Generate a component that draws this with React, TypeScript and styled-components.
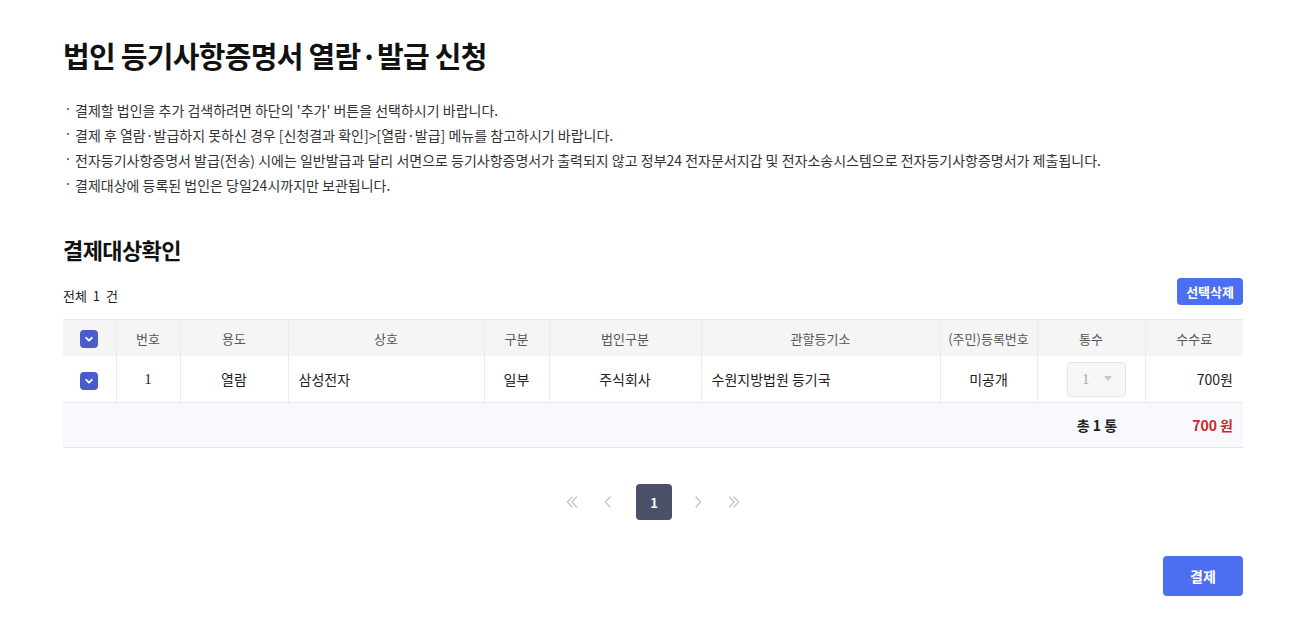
import React from 'react'
import styled, { createGlobalStyle } from 'styled-components'

const GlobalStyle = createGlobalStyle`
  html, body {
    margin: 0;
    padding: 0;
    background: #fff;
    font-family: "Noto Sans CJK KR", "Noto Sans", sans-serif;
    color: #222;
  }
`

const Page = styled.div`
  width: 1180px;
  padding: 35px 0 30px 63px;
`

const Title = styled.h1`
  margin: 0;
  font-size: 29px;
  line-height: 40px;
  font-weight: 700;
  color: #111;
  letter-spacing: -0.7px;
`

const Notice = styled.ul`
  list-style: none;
  margin: 23px 0 0;
  padding: 0;
`

const NoticeItem = styled.li`
  position: relative;
  padding-left: 12px;
  font-size: 14px;
  line-height: 25px;
  color: #333;
  &::before {
    content: '·';
    position: absolute;
    left: 1px;
    top: -2px;
    color: #555;
  }
`

const SubTitle = styled.h2`
  margin: 36px 0 0;
  font-size: 22px;
  line-height: 30px;
  font-weight: 700;
  color: #111;
  letter-spacing: -0.6px;
`

const Toolbar = styled.div`
  margin-top: 14px;
  display: flex;
  justify-content: space-between;
  align-items: flex-end;
`

const Total = styled.div`
  font-size: 13px;
  line-height: 18px;
  color: #222;
  word-spacing: 3px;
`

const SmallButton = styled.button`
  height: 27px;
  padding: 0 9px;
  border: none;
  border-radius: 4px;
  background: #4c6ef0;
  color: #fff;
  font-family: inherit;
  font-size: 13px;
  font-weight: 700;
`

const Table = styled.table`
  margin-top: 14px;
  width: 1180px;
  border-collapse: collapse;
  table-layout: fixed;
  font-size: 14px;
  border-top: 1px solid #e8e8e8;
  border-bottom: 1px solid #e5e5e5;
`

const Th = styled.th`
  height: 36px;
  padding: 0;
  background: #f5f5f5;
  font-weight: 400;
  font-size: 13px;
  color: #555;
  text-align: center;
  border-left: 1px solid #ebebeb;
  &:first-child { border-left: none; }
`

const Td = styled.td<{ align?: string; serif?: boolean }>`
  height: 46px;
  padding: 0 10px;
  text-align: ${({ align }) => align || 'center'};
  color: #222;
  border-left: 1px solid #ebebeb;
  border-bottom: 1px solid #ebebeb;
  font-family: ${({ serif }) => (serif ? '"Liberation Serif", serif' : 'inherit')};
  font-size: ${({ serif }) => (serif ? '15px' : '14px')};
  &:first-child { border-left: none; }
`

const SumRow = styled.tr`
  background: #f8f9fd;
`

const SumCell = styled.td<{ red?: boolean }>`
  height: 44px;
  padding: ${({ red }) => (red ? '0 10px' : '0 0 0 12px')};
  font-weight: 700;
  font-size: 14px;
  color: ${({ red }) => (red ? '#c8282e' : '#222')};
  text-align: ${({ red }) => (red ? 'right' : 'center')};
`

const Check = styled.span`
  display: inline-flex;
  align-items: center;
  justify-content: center;
  width: 18px;
  height: 18px;
  border-radius: 4px;
  background: #4a5bcb;
  vertical-align: middle;
`

const SelectBox = styled.div`
  display: inline-flex;
  align-items: center;
  justify-content: space-between;
  width: 59px;
  height: 35px;
  margin-left: 11px;
  box-sizing: border-box;
  padding: 0 13px 0 14px;
  border: 1px solid #e6e6e6;
  border-radius: 4px;
  background: #f7f7f7;
  color: #aaa;
  font-size: 15px;
  font-family: "Liberation Serif", serif;
  vertical-align: middle;
`

const Pager = styled.div`
  margin-top: 36px;
  display: flex;
  justify-content: center;
  align-items: center;
`

const PageArrow = styled.span`
  width: 36px;
  height: 36px;
  display: flex;
  align-items: center;
  justify-content: center;
`

const PageNum = styled.span<{ active?: boolean }>`
  width: 36px;
  height: 36px;
  margin: 0 8px 0 10px;
  display: flex;
  align-items: center;
  justify-content: center;
  border-radius: 4px;
  background: ${({ active }) => (active ? '#4b5069' : 'transparent')};
  color: ${({ active }) => (active ? '#fff' : '#333')};
  font-size: 13px;
  font-weight: 700;
`

const Footer = styled.div`
  margin-top: 36px;
  display: flex;
  justify-content: flex-end;
`

const PayButton = styled.button`
  width: 80px;
  height: 40px;
  border: none;
  border-radius: 4px;
  background: #4c6ef0;
  color: #fff;
  font-family: inherit;
  font-size: 14px;
  font-weight: 700;
`

const CheckMark = () => (
  <Check>
    <svg width="12" height="12" viewBox="0 0 12 12">
      <path d="M3.2 4.8 L6 7.6 L8.8 4.8" fill="none" stroke="#fff" strokeWidth="1.9" strokeLinecap="round" strokeLinejoin="round" />
    </svg>
  </Check>
)

const Chevron = ({ dir, double }: { dir: 'left' | 'right'; double?: boolean }) => {
  const flip = dir === 'right' ? 'scale(-1,1) translate(-14,0)' : undefined
  return (
    <svg width="14" height="14" viewBox="0 0 14 14">
      <g transform={flip} fill="none" stroke="#c4c4c4" strokeWidth="1.3" strokeLinecap="round" strokeLinejoin="round">
        {double ? (
          <>
            <path d="M7 2 L2.5 7 L7 12" />
            <path d="M11.5 2 L7 7 L11.5 12" />
          </>
        ) : (
          <path d="M9 2 L4.5 7 L9 12" />
        )}
      </g>
    </svg>
  )
}

const notices = [
  "결제할 법인을 추가 검색하려면 하단의 '추가' 버튼을 선택하시기 바랍니다.",
  '결제 후 열람·발급하지 못하신 경우 [신청결과 확인]>[열람·발급] 메뉴를 참고하시기 바랍니다.',
  '전자등기사항증명서 발급(전송) 시에는 일반발급과 달리 서면으로 등기사항증명서가 출력되지 않고 정부24 전자문서지갑 및 전자소송시스템으로 전자등기사항증명서가 제출됩니다.',
  '결제대상에 등록된 법인은 당일24시까지만 보관됩니다.',
]

const cols = [53, 64, 108, 196, 65, 152, 239, 97, 108, 98]
const heads = ['번호', '용도', '상호', '구분', '법인구분', '관할등기소', '(주민)등록번호', '통수', '수수료']

export default function App() {
  return (
    <>
      <GlobalStyle />
      <Page>
        <Title>법인 등기사항증명서 열람·발급 신청</Title>
        <Notice>
          {notices.map((n) => (
            <NoticeItem key={n}>{n}</NoticeItem>
          ))}
        </Notice>

        <SubTitle>결제대상확인</SubTitle>
        <Toolbar>
          <Total>전체 1 건</Total>
          <SmallButton>선택삭제</SmallButton>
        </Toolbar>

        <Table>
          <colgroup>
            {cols.map((w, i) => (
              <col key={i} style={{ width: w }} />
            ))}
          </colgroup>
          <thead>
            <tr>
              <Th><CheckMark /></Th>
              {heads.map((h) => (
                <Th key={h}>{h}</Th>
              ))}
            </tr>
          </thead>
          <tbody>
            <tr>
              <Td><CheckMark /></Td>
              <Td serif>1</Td>
              <Td>열람</Td>
              <Td align="left">삼성전자</Td>
              <Td>일부</Td>
              <Td>주식회사</Td>
              <Td align="left">수원지방법원 등기국</Td>
              <Td>미공개</Td>
              <Td>
                <SelectBox>
                  <span>1</span>
                  <svg width="8" height="6" viewBox="0 0 8 6">
                    <path d="M0 0 H8 L4 5 Z" fill="#c8c8c8" />
                  </svg>
                </SelectBox>
              </Td>
              <Td align="right">700원</Td>
            </tr>
            <SumRow>
              <SumCell colSpan={8} />
              <SumCell>총 1 통</SumCell>
              <SumCell red>700 원</SumCell>
            </SumRow>
          </tbody>
        </Table>

        <Pager>
          <PageArrow><Chevron dir="left" double /></PageArrow>
          <PageArrow><Chevron dir="left" /></PageArrow>
          <PageNum active>1</PageNum>
          <PageArrow><Chevron dir="right" /></PageArrow>
          <PageArrow><Chevron dir="right" double /></PageArrow>
        </Pager>

        <Footer>
          <PayButton>결제</PayButton>
        </Footer>
      </Page>
    </>
  )
}
